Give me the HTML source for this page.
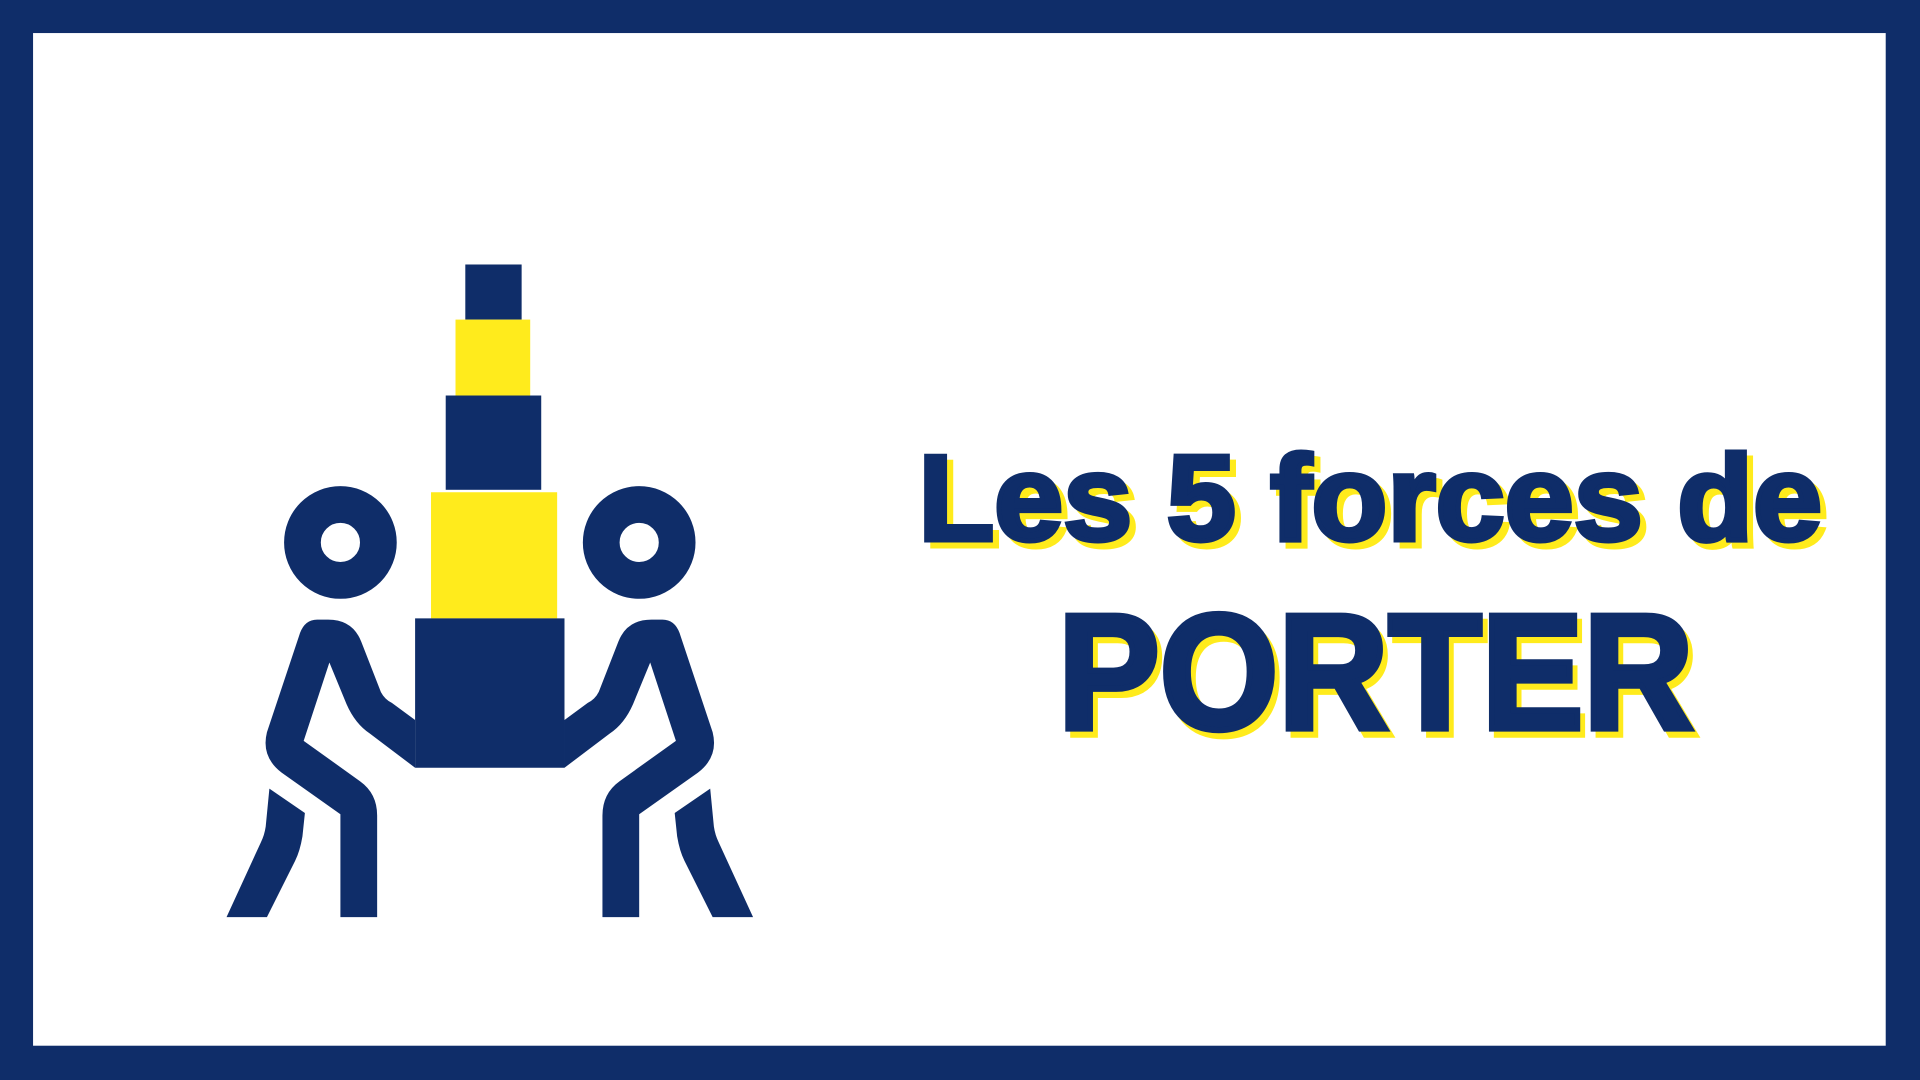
<!DOCTYPE html>
<html><head><meta charset="utf-8"><style>
html,body{margin:0;padding:0;width:1920px;height:1080px;overflow:hidden;background:#0f2d69}
svg{display:block}
</style></head><body>
<svg width="1920" height="1080" viewBox="0 0 1920 1080" xmlns="http://www.w3.org/2000/svg">
<rect width="1920" height="1080" fill="#0f2d69"/>
<g transform="scale(1.22449)">
<rect x="27" y="27" width="1513" height="827" fill="#fff"/>
<rect x="380" y="216" width="46" height="45" fill="#0f2d69"/>
<rect x="372" y="261" width="61" height="62" fill="#ffeb1c"/>
<rect x="364" y="323" width="78" height="77" fill="#0f2d69"/>
<rect x="352" y="402" width="103" height="103" fill="#ffeb1c"/>
<rect x="339" y="505" width="122" height="122" fill="#0f2d69"/>
<g id="p" fill="#0f2d69">
<circle cx="278" cy="443" r="31" fill="none" stroke="#0f2d69" stroke-width="30"/>
<path d="M259 506 L268 506 Q288 506 295 524 L311 565 Q314 571 320 574 L339 588 L339 627 L302 599 Q290 591 283 575 L269 541 L248 605 L294 638 Q308 648 308 666 L308 749 L278 749 L278 665 L230 631 Q213 618 218 598 L245 517 Q249 506 259 506 Z"/>
<path d="M220 644 L249 664 L247 683 Q245 695 241 703 L218 749 L185 749 L213 688 Q216 682 217 675 Z"/>
</g>
<use href="#p" transform="translate(800,0) scale(-1,1)"/>
<g font-family="'Liberation Sans',sans-serif" font-weight="bold" stroke-linejoin="miter">
<text x="755" y="446" font-size="99" fill="#ffeb1c" stroke="#ffeb1c" stroke-width="4" textLength="738" lengthAdjust="spacingAndGlyphs">Les 5 forces de</text>
<text x="750" y="441" font-size="99" fill="#0f2d69" stroke="#0f2d69" stroke-width="4" textLength="738" lengthAdjust="spacingAndGlyphs">Les 5 forces de</text>
<text x="868" y="600" font-size="134" fill="#ffeb1c" stroke="#ffeb1c" stroke-width="5" textLength="519" lengthAdjust="spacingAndGlyphs">PORTER</text>
<text x="864" y="595" font-size="134" fill="#0f2d69" stroke="#0f2d69" stroke-width="5" textLength="519" lengthAdjust="spacingAndGlyphs">PORTER</text>
</g>
</g>
</svg>
</body></html>
